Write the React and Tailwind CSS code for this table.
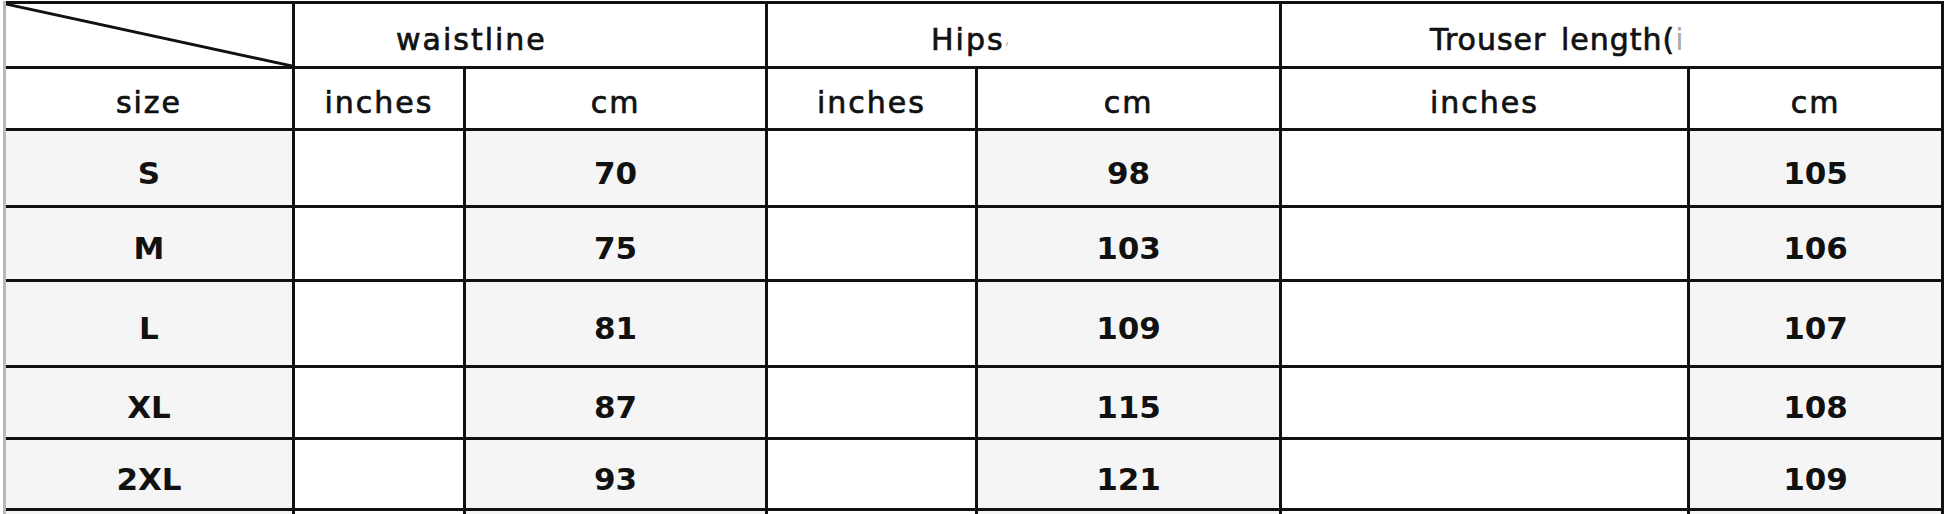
import React from "react";

const font = { fontFamily: '"DejaVu Sans", "Liberation Sans", sans-serif' };

function Head({ children, className = "" }) {
  return (
    <div className={`bg-white flex items-center pt-[8px] text-[30px] text-[#111] whitespace-pre [-webkit-text-stroke:0.7px_#111] ${className}`}>
      {children}
    </div>
  );
}

function Cell({ children, gray }) {
  return (
    <div className={`${gray ? "bg-[#f5f5f5]" : "bg-white"} flex items-center justify-center pt-[10px] text-[31px] font-bold text-[#111]`}>
      {children}
    </div>
  );
}

const rows = [
  ["S", "70", "98", "105"],
  ["M", "75", "103", "106"],
  ["L", "81", "109", "107"],
  ["XL", "87", "115", "108"],
  ["2XL", "93", "121", "109"],
  ["", "", "", ""],
];

export default function App() {
  return (
    <div className="w-[1946px] h-[514px] overflow-hidden bg-white" style={font}>
      <div className="ml-[3px] mt-[1px] w-[1941px] border-l-[3px] border-[#b8b8b8] bg-[#111] pt-[3px] pr-[3px] grid gap-[3px] grid-cols-[286px_168px_299px_207px_301px_405px_251px] grid-rows-[62px_59px_74px_71px_83px_69px_68px_70px]">
        <div className="bg-white">
          <svg className="w-full h-full block" viewBox="0 0 286 62" preserveAspectRatio="none">
            <line x1="0" y1="0" x2="286" y2="62" stroke="#111" strokeWidth="2.8" />
          </svg>
        </div>
        <Head className="col-span-2 pl-[101px] tracking-[2px]">waistline</Head>
        <Head className="col-span-2 pl-[163px] tracking-[2px]">Hips<span className="text-[#bbb] text-[16px] [-webkit-text-stroke:0]">,</span></Head>
        <Head className="col-span-2 pl-[148px] tracking-[1px]">
          Trouser <span className="ml-[4px]">length(</span><span className="text-[#aaa] [-webkit-text-stroke:0]">i</span>
        </Head>

        <Head className="justify-center tracking-[2px]">size</Head>
        <Head className="justify-center tracking-[2px]">inches</Head>
        <Head className="justify-center tracking-[2px]">cm</Head>
        <Head className="justify-center tracking-[2px]">inches</Head>
        <Head className="justify-center tracking-[2px]">cm</Head>
        <Head className="justify-center tracking-[2px]">inches</Head>
        <Head className="justify-center tracking-[2px]">cm</Head>

        {rows.map((r, i) => (
          <React.Fragment key={i}>
            <Cell gray>{r[0]}</Cell>
            <Cell />
            <Cell gray>{r[1]}</Cell>
            <Cell />
            <Cell gray>{r[2]}</Cell>
            <Cell />
            <Cell gray>{r[3]}</Cell>
          </React.Fragment>
        ))}
      </div>
    </div>
  );
}
